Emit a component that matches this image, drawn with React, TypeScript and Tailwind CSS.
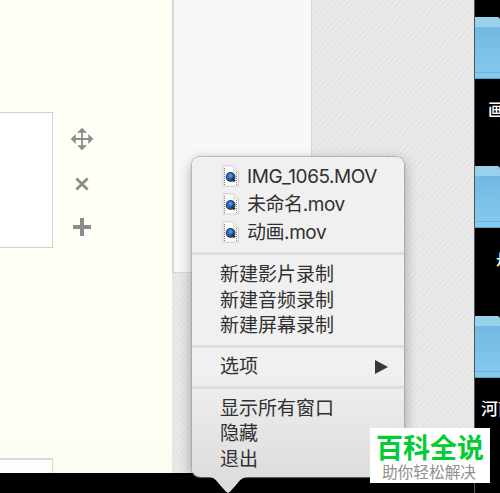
import React from 'react';

interface DesktopFolder {
  label: string;
  offset: string;
}

const recentFiles = ['IMG_1065.MOV', '未命名.mov', '动画.mov'];
const recordItems = ['新建影片录制', '新建音频录制', '新建屏幕录制'];
const windowItems = ['显示所有窗口', '隐藏', '退出'];

const folders: DesktopFolder[] = [
  { label: '画', offset: 'pl-[13px]' },
  { label: '舟', offset: 'pl-[21px]' },
  { label: '河南', offset: 'pl-[6px]' },
];

const MoveIcon: React.FC = () => (
  <svg width="24" height="24" viewBox="0 0 24 24" fill="#8c8c8c">
    <path d="M12 .7 16.9 5.7H7.1ZM12 23.3 7.1 18.3h9.8ZM.7 12 5.7 7.1v9.8ZM23.3 12l-5 4.9V7.1Z" />
    <path d="M11.1 5h1.8v14h-1.8zM5 11.1h14v1.8H5z" />
  </svg>
);

const CloseIcon: React.FC = () => (
  <svg width="14" height="14" viewBox="0 0 14 14" fill="none" stroke="#8c8c8c" strokeWidth="2.8">
    <path d="m1.4 1.4 11.2 11.2M12.6 1.4 1.4 12.6" />
  </svg>
);

const PlusIcon: React.FC = () => (
  <svg width="18" height="18" viewBox="0 0 18 18" fill="#8c8c8c">
    <path d="M7 0h4v7h7v4h-7v7H7v-7H0V7h7z" />
  </svg>
);

const MovieIcon: React.FC = () => (
  <svg width="18" height="22" viewBox="0 0 18 22">
    <path d="M1 .8h10.5l5 5v15.4H1z" fill="#fdfdfd" stroke="#c6c6c6" strokeWidth=".8" />
    <path d="M11.5 1v5h5" fill="#eee" stroke="#cfcfcf" strokeWidth=".7" />
    <path d="M2.5 3v17M14.5 7v13" stroke="#7d7d7d" strokeWidth="1" strokeDasharray="1 1" />
    <circle cx="8.6" cy="12" r="4.9" fill="#3a4654" />
    <circle cx="8.4" cy="11.6" r="3.7" fill="#1c5fbd" />
    <circle cx="8.4" cy="10.7" r="2" fill="#4b90e2" />
    <path d="m9.8 13.3 3 3" stroke="#27323d" strokeWidth="2.4" />
  </svg>
);

const Separator: React.FC = () => <div className="h-[3px] bg-[#dedede]" />;

const MenuGroup: React.FC<{ items: string[] }> = ({ items }) => (
  <ul>
    {items.map((item) => (
      <li key={item} className="h-[25.5px] pl-7 leading-[25.5px]">{item}</li>
    ))}
  </ul>
);

const EditorPane: React.FC = () => (
  <div className="flex w-[172px] shrink-0 flex-col bg-linear-to-b from-[#fffff6] from-90% to-[#fbfbf2]">
    <div className="mt-28 flex">
      <div className="h-[136px] w-[53px] border border-l-0 border-[#cfd0d2] bg-white" />
      <div className="flex w-[57px] flex-col items-center pt-[15px]">
        <MoveIcon />
        <div className="mt-[26px]"><CloseIcon /></div>
        <div className="mt-[27px]"><PlusIcon /></div>
      </div>
    </div>
    <div className="mt-[210px] h-[15px] w-[53px] border-t-2 border-r border-[#dadad6] bg-[#fdfdfd]" />
  </div>
);

// Linen weave: two fine stripe layers at slightly different pitch
const SidePane: React.FC = () => (
  <div className="w-[302px] shrink-0 bg-[#e6e6e6] bg-[repeating-linear-gradient(135deg,#ffffff40_0px,#ffffff00_2px,#ffffff40_4px),repeating-linear-gradient(128deg,#00000006_0px,#00000000_3px,#00000006_5px)]">
    <div className="h-[273px] w-[140px] border-r border-b border-l-2 border-[#d7d7d7] bg-[#f8f8f8]" />
  </div>
);

const Desktop: React.FC = () => (
  <div className="w-[26px] shrink-0 overflow-hidden border-l border-[#555] pt-[17px]">
    {folders.map((folder) => (
      <div key={folder.label} className="h-[149.4px] w-20">
        <div className="h-[10px] w-[25px] rounded-tr-[3px] bg-[#99d1ed]" />
        <div className="h-[52px] border-b border-[#5c9fc4] bg-linear-to-b from-[#73b8e2] to-[#86caee]">
          <div className="h-[46px] border-b border-[#70b2d8]" />
        </div>
        <div className={`${folder.offset} mt-[19px] text-[17px] leading-6 font-medium text-white`}>{folder.label}</div>
      </div>
    ))}
  </div>
);

const DockMenu: React.FC = () => (
  <div className="absolute top-[157px] left-[192px] h-[320px] w-[212px] rounded-lg bg-linear-to-b from-[#f0f0f0] from-68% to-[#dddddd] pt-[5px] text-[19px] text-[#303030] shadow-[0_0_1px_1px_#9999,0_4px_14px_#0005]">
    <ul className="mb-[6px]">
      {recentFiles.map((file) => (
        <li key={file} className="flex h-7 items-center pl-[30px]">
          <MovieIcon />
          <span className="mt-[2px] ml-[7px] tracking-[-0.44px]">{file}</span>
        </li>
      ))}
    </ul>
    <Separator />
    <div className="pt-[7px] pb-[6px]">
      <MenuGroup items={recordItems} />
    </div>
    <Separator />
    <div className="flex h-[38px] items-center justify-between pr-[16px] pl-7">
      <span className="mt-[2px]">选项</span>
      <svg width="13" height="14" viewBox="0 0 13 14" fill="#373737">
        <path d="M0 0 13 7 0 14z" />
      </svg>
    </div>
    <Separator />
    <div className="pt-[7px]">
      <MenuGroup items={windowItems} />
    </div>
    <svg className="absolute top-[320px] left-[16px]" width="42" height="16" viewBox="0 0 42 16" fill="#dddddd">
      <path d="M0 0C6 0 8 3 12 8L18 14.7Q20 17 22 14.7L28 8C32 3 34 0 41 0Z" />
    </svg>
  </div>
);

const Watermark: React.FC = () => (
  <div className="absolute top-[428px] left-[370px] flex h-[55px] w-[120px] flex-col items-center bg-white whitespace-nowrap">
    <span className="mt-[5px] text-[27px] leading-[31px] font-bold text-[#00cc33]">百科全说</span>
    <span className="mr-[2px] text-[15.7px] leading-[17px] text-[#909090]">助你轻松解决</span>
  </div>
);

const App: React.FC = () => {
  return (
    <div className="relative h-[493px] w-[500px] overflow-hidden bg-black font-['Inter','Noto_Sans_CJK_SC',sans-serif]">
      <div className="flex h-[493px]">
        <div className="flex h-[473px] overflow-hidden">
          <EditorPane />
          <SidePane />
        </div>
        <Desktop />
      </div>
      <DockMenu />
      <Watermark />
    </div>
  );
};

export default App;
